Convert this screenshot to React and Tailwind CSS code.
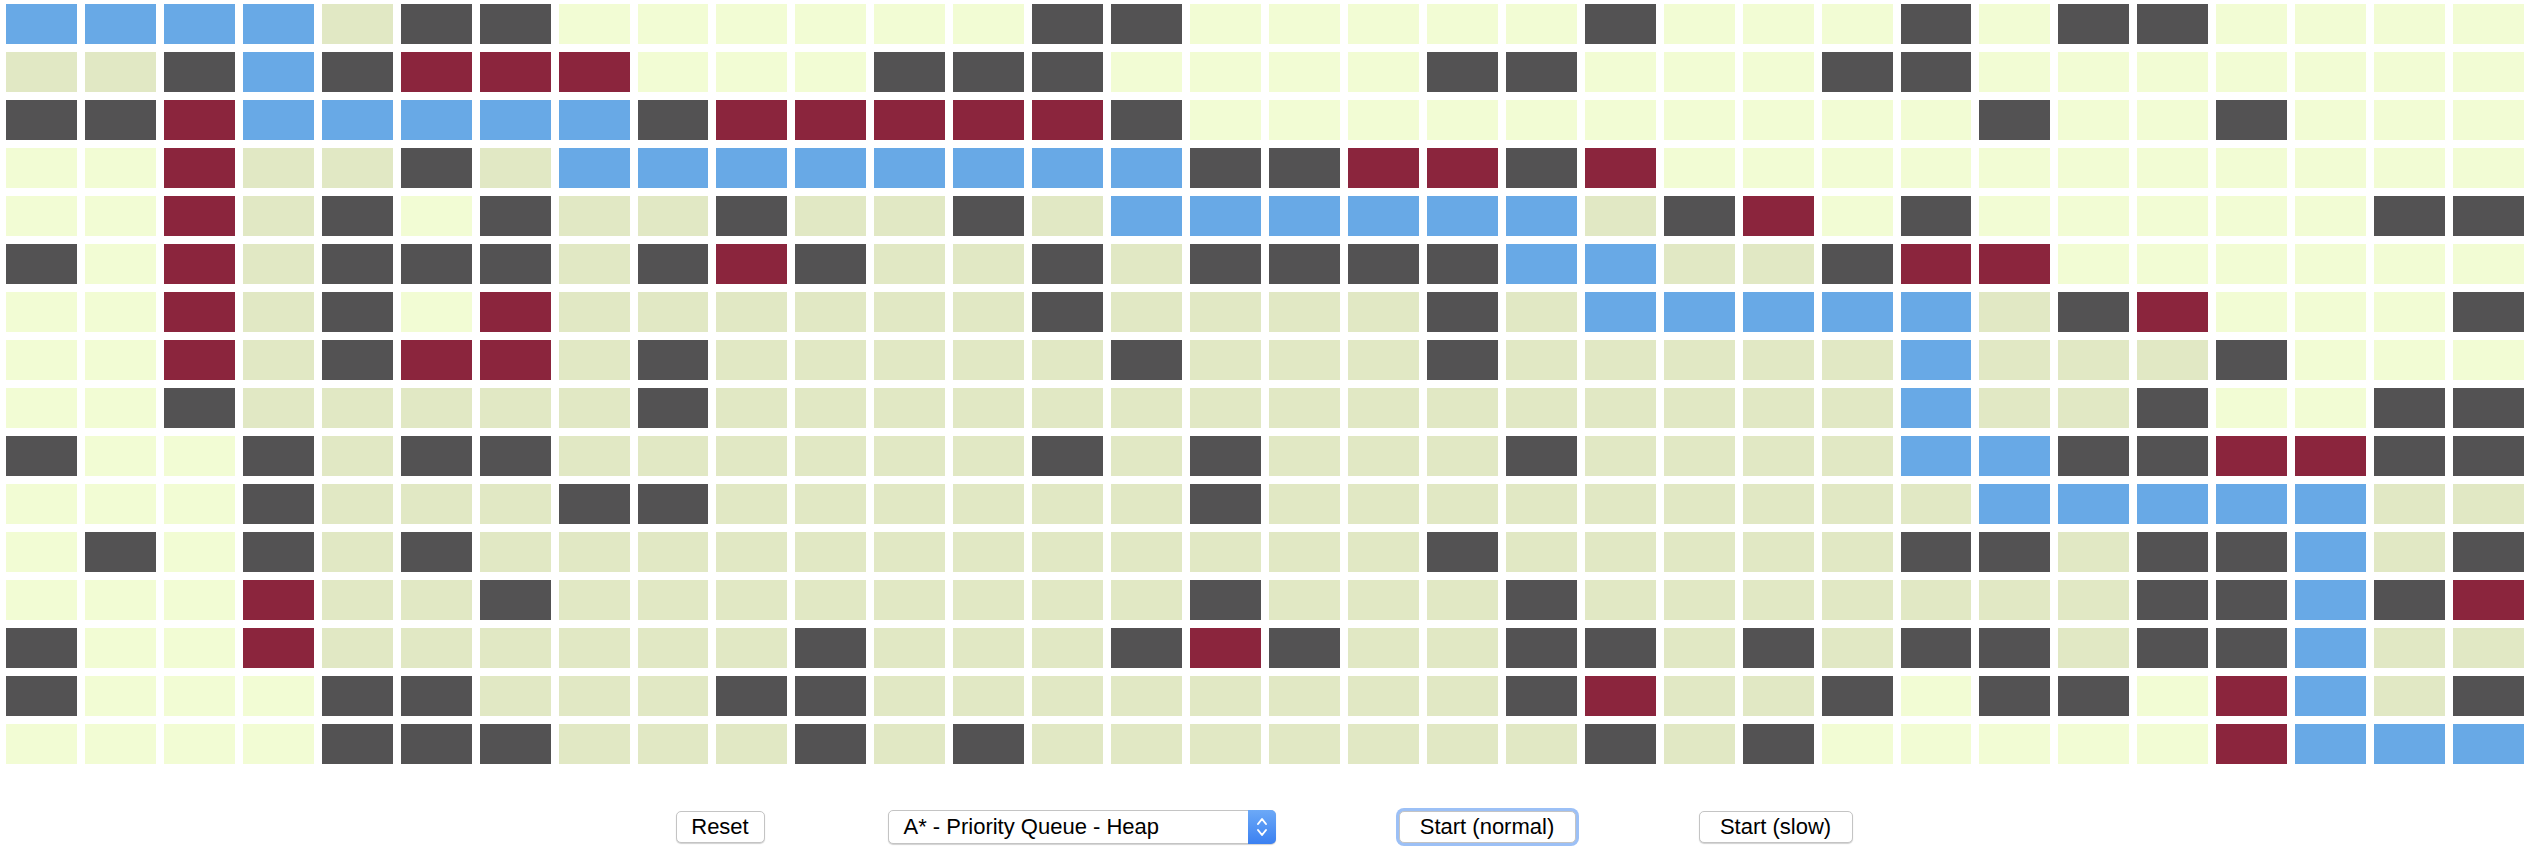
import { useState } from 'react';

// B = path, O = visited, P = open, D = wall, R = frontier
const rows = [
  'BBBBODDPPPPPPDDPPPPPDPPPDPDDPPPP',
  'OODBDRRRPPPDDDPPPPDDPPPDDPPPPPPP',
  'DDRBBBBBDRRRRRDPPPPPPPPPPDPPDPPP',
  'PPROODOBBBBBBBBDDRRDRPPPPPPPPPPP',
  'PPRODPDOODOODOBBBBBBODRPDPPPPPDD',
  'DPRODDDODRDOODODDDDBBOODRRPPPPPP',
  'PPRODPROOOOOODOOOODOBBBBBODRPPPD',
  'PPRODRRODOOOOODOOODOOOOOBOOODPPP',
  'PPDOOOOODOOOOOOOOOOOOOOOBOODPPDD',
  'DPPDODDOOOOOODODOOODOOOOBBDDRRDD',
  'PPPDOOODDOOOOOODOOOOOOOOOBBBBBOO',
  'PDPDODOOOOOOOOOOOODOOOOODDODDBOD',
  'PPPROODOOOOOOOODOOODOOOOOOODDBDR',
  'DPPROOOOOODOOODRDOODDODODDODDBOO',
  'DPPPDDOOODDOOOOOOOODROODPDDPRBOD',
  'PPPPDDDOOODODOOOOOOODODPPPPPRBBB',
];

const colors = {
  B: 'bg-[#68a9e6]',
  O: 'bg-[#e1e8c4]',
  P: 'bg-[#f2fcd4]',
  D: 'bg-[#535253]',
  R: 'bg-[#8b253d]',
};

const Cell = ({ kind }) => <div className={`h-[40px] ${colors[kind]}`} />;

const Btn = ({ children, width, focused }) => (
  <button
    className={`h-[32px] ${width} bg-white rounded-[5px] border border-[#c4c4c4] shadow-[0_1px_1px_rgba(0,0,0,0.18)] text-[22px] leading-none text-black ${
      focused ? 'ring-[3px] ring-[#9cc0f6] border-[#7fa9ee]' : ''
    }`}
  >
    {children}
  </button>
);

export default function App() {
  const [algo] = useState('A* - Priority Queue - Heap');

  return (
    <div className="w-[2528px] h-[868px] bg-white font-['Liberation_Sans',Arial,sans-serif]">
      {/* Grid */}
      <div className="grid grid-cols-[repeat(32,minmax(0,1fr))] gap-[8px] pt-[4px] pl-[6px] pr-[4px]">
        {rows.map((row, r) =>
          row.split('').map((k, c) => <Cell key={`${r}-${c}`} kind={k} />)
        )}
      </div>

      {/* Controls */}
      <div className="flex justify-center items-center gap-[123px] mt-[45px] h-[36px]">
        <Btn width="w-[89px]">Reset</Btn>

        <div className="w-[388px] h-[34px] flex items-stretch bg-white rounded-[5px] border border-[#c4c4c4] shadow-[0_1px_1px_rgba(0,0,0,0.18)]">
          <div className="flex-1 flex items-center pl-[15px] text-[22px] leading-none text-black">{algo}</div>
          <div className="w-[28px] -my-px -mr-px rounded-r-[5px] bg-gradient-to-b from-[#6ca9f7] to-[#3b80f1] flex items-center justify-center">
            <svg width="12" height="22" viewBox="0 0 12 22" fill="none" stroke="white" strokeWidth="2" strokeLinecap="round" strokeLinejoin="round">
              <path d="M2 8 L6 3 L10 8" />
              <path d="M2 14 L6 19 L10 14" />
            </svg>
          </div>
        </div>

        <Btn width="w-[177px]" focused>Start (normal)</Btn>
        <Btn width="w-[154px]">Start (slow)</Btn>
      </div>
    </div>
  );
}
